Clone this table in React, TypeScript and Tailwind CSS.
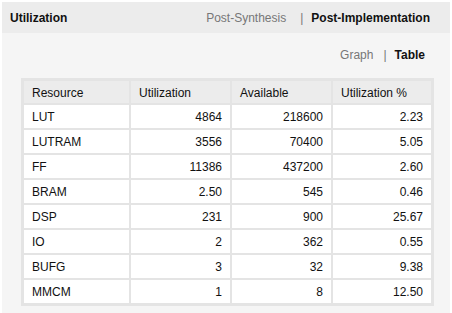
const rows: [string, string, string, string][] = [
  ["LUT", "4864", "218600", "2.23"],
  ["LUTRAM", "3556", "70400", "5.05"],
  ["FF", "11386", "437200", "2.60"],
  ["BRAM", "2.50", "545", "0.46"],
  ["DSP", "231", "900", "25.67"],
  ["IO", "2", "362", "0.55"],
  ["BUFG", "3", "32", "9.38"],
  ["MMCM", "1", "8", "12.50"],
];

const headers = ["Resource", "Utilization", "Available", "Utilization %"];

export default function App() {
  return (
    <div className="w-[452px] h-[313px] bg-white pt-[2px] pl-[2px] pr-[2px] font-['Liberation_Sans',Arial,sans-serif] text-[#111]">
      <div className="h-[311px] bg-[#f5f5f5]">
        <div className="h-[31px] bg-[#ececec] flex items-center pl-[8px] pr-[20px]">
          <span className="text-[12px] font-bold">Utilization</span>
          <div className="ml-auto flex items-center text-[12px]">
            <span className="text-[#777]">Post-Synthesis</span>
            <span className="text-[#777] ml-[14px] mr-[8px]">|</span>
            <span className="font-bold">Post-Implementation</span>
          </div>
        </div>
        <div className="h-[40px] flex items-center justify-end pr-[25px] pt-[3px] text-[12px]">
          <span className="text-[#777]">Graph</span>
          <span className="text-[#777] ml-[10px] mr-[8px]">|</span>
          <span className="font-bold">Table</span>
        </div>
        <div className="mt-[5px] ml-[19px] w-[413px] bg-[#e4e4e4] p-[3px] text-[12px]">
          <div className="grid grid-cols-[105px_99px_99px_98px] gap-[2px]">
            {headers.map((h) => (
              <div key={h} className="h-[22px] bg-[#ececec] flex items-center px-[8px] pt-[1px]">
                {h}
              </div>
            ))}
            {rows.map((r) =>
              r.map((c, i) => (
                <div
                  key={r[0] + i}
                  className={
                    "h-[23px] bg-white flex items-center px-[8px] pt-[1px] " +
                    (i === 0 ? "justify-start" : "justify-end")
                  }
                >
                  {c}
                </div>
              ))
            )}
          </div>
        </div>
      </div>
    </div>
  );
}
